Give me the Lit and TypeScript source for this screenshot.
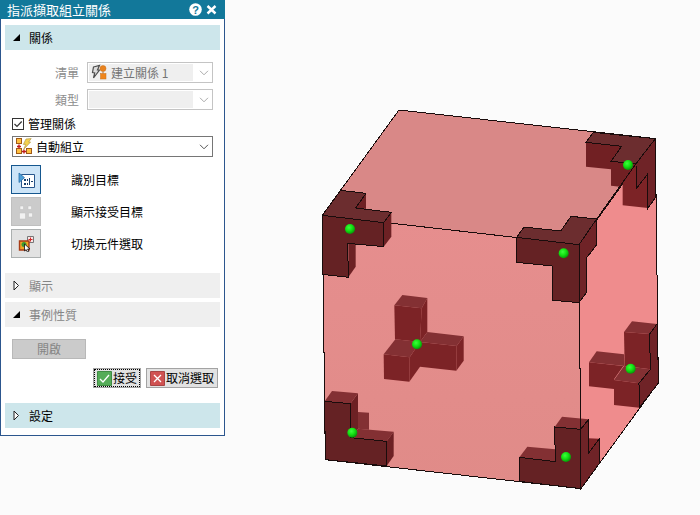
import { LitElement, html, svg, css } from "lit";
import { customElement, state } from "lit/decorators.js";

interface Face {
  tone: string;
  pts: string;
  edge?: boolean;
}

// Outer faces of the translucent cube.
const cube: Face[] = [
  { tone: "top", pts: "267,30 1036,116 807,434 37,346", edge: true },
  { tone: "front", pts: "37,346 807,434 813,1166 46,1079", edge: true },
  { tone: "right", pts: "807,434 1036,116 1045,848 813,1166", edge: true },
];

// Corner brackets; faces with an edge lie on the surface, the rest are seen through it.
const brackets: Face[] = [
  // top left
  { tone: "d-side", pts: "168,280 168,327 137,324" },
  { tone: "d-side", pts: "221,368 244,337 244,410 221,440" },
  { tone: "d-side", pts: "115,430 137,432 137,500 115,532" },
  { tone: "d-top", pts: "37,346 92,271 168,280 137,324 244,337 221,368", edge: true },
  { tone: "d-front", pts: "37,346 221,368 221,440 113,430 115,532 38,523", edge: true },
  // top right, near
  { tone: "d-top", pts: "620,412 642,381 752,393 783,349 860,357 807,434", edge: true },
  { tone: "d-front", pts: "620,412 807,434 807,608 729,601 727,498 620,487", edge: true },
  { tone: "d-right", pts: "807,434 860,357 861,433 830,473 830,577 807,608", edge: true },
  // top right, far
  { tone: "d-wall", pts: "828,127 935,139 903,184 978,191 930,260 903,257 903,208 828,200" },
  { tone: "d-inner", pts: "978,191 979,266 1013,222 1014,324 938,316 938,250" },
  { tone: "d-top", pts: "828,127 850,97 1036,116 978,191 903,184 935,139", edge: true },
  { tone: "d-right", pts: "1036,116 978,191 979,266 1013,222 1014,324 1037,292", edge: true },
  // back left, bottom
  { tone: "d-inner", pts: "253,616 335,625 330,726 255,718" },
  { tone: "d-inner", pts: "335,625 352,594 352,696 330,726" },
  { tone: "d-lid", pts: "277,585 352,594 335,625 253,616" },
  { tone: "d-inner", pts: "330,726 440,738 439,812 330,800" },
  { tone: "d-inner", pts: "440,738 461,709 461,782 439,812" },
  { tone: "d-lid", pts: "352,696 461,709 440,738 330,726" },
  { tone: "d-inner", pts: "221,763 299,772 298,845 222,837" },
  { tone: "d-inner", pts: "299,772 330,726 330,800 298,845" },
  { tone: "d-lid", pts: "256,718 330,726 299,772 221,763" },
  // bottom left
  { tone: "d-lid", pts: "144,936 177,938 177,989 144,986" },
  { tone: "d-side", pts: "121,911 144,880 144,986 122,1013" },
  { tone: "d-lid", pts: "44,904 66,873 144,880 121,911" },
  { tone: "d-lid", pts: "122,1013 144,986 251,995 230,1024" },
  { tone: "d-side", pts: "230,1024 251,995 251,1068 230,1098" },
  { tone: "d-front", pts: "44,904 121,911 122,1013 230,1024 230,1098 46,1079", edge: true },
  // bottom right, near
  { tone: "d-inner", pts: "835,1015 868,1016 835,1060" },
  { tone: "d-lid", pts: "734,981 756,950 836,958 812,988" },
  { tone: "d-lid", pts: "628,1072 652,1040 736,1048 736,1085" },
  { tone: "d-front", pts: "628,1072 736,1085 734,981 812,988 813,1166 628,1144", edge: true },
  { tone: "d-right", pts: "812,988 836,958 835,1060 868,1016 869,1089 813,1166", edge: true },
  // bottom right, far
  { tone: "d-inner", pts: "837,787 940,798 912,838 912,867 837,859" },
  { tone: "d-lid", pts: "837,787 860,754 942,763 944,798" },
  { tone: "d-inner", pts: "942,696 1019,702 1021,808 944,798" },
  { tone: "d-lid", pts: "942,696 966,664 1041,672 1019,702" },
  { tone: "d-inner", pts: "912,840 987,850 988,923 912,915" },
  { tone: "d-lid", pts: "942,798 1021,808 987,850 912,840" },
  { tone: "d-right", pts: "1041,672 1019,702 1021,808 987,850 988,923 1046,848", edge: true },
];

const markers = [
  [120, 387], [761, 460], [954, 195], [321, 733],
  [127, 998], [768, 1071], [962, 806],
];

const face = (f: Face) =>
  svg`<polygon class="${f.tone} ${f.edge ? "edge" : "plain"}" points=${f.pts}></polygon>`;

const chevron = html`<svg class="chevron" viewBox="0 0 10 6" aria-hidden="true">
  <path d="M1 .8 5 4.8 9 .8" />
</svg>`;

const arrow = (open: boolean) => html`<svg class="arrow" viewBox="0 0 9 11" aria-hidden="true">
  ${open
    ? svg`<path d="M8 2V9H1Z" fill="#000"></path>`
    : svg`<path d="M2 1V10L6.5 5.5Z" fill="#fff" stroke="#222"></path>`}
</svg>`;

const createIcon = html`<svg class="pick-icon" viewBox="0 0 16 16" aria-hidden="true">
  <path d="M2.500 3 8.500 1.500 6.500 6H8.500L2.500 14 3.700 9 1.500 8.500Z" fill="#dcdcdc" stroke="#4c4c4c" stroke-width="1.200" />
  <circle cx="12" cy="4.500" r="3" fill="#e8821e" stroke="#c87018" stroke-width=".5" />
  <rect x="9.500" y="9.500" width="5.500" height="5.500" fill="#f0861c" stroke="#c87018" stroke-width=".5" />
  <path d="M12 7.500V9.500" stroke="#b06a2c" />
</svg>`;

const autoIcon = html`<svg class="pick-icon" viewBox="0 0 16 16" aria-hidden="true">
  <rect x=".5" y=".5" width="5" height="5" fill="#ffc040" stroke="#a05a18" />
  <rect x=".5" y="10.500" width="5" height="5" fill="#ffc040" stroke="#a05a18" />
  <rect x="10.500" y="10.500" width="5" height="5" fill="#ffc040" stroke="#a05a18" />
  <path d="M1 8.500H5M3 6.500V10.500M6 13.500H10M8 11.500V15.500" stroke="#c01c1c" stroke-width="1.400" />
  <path d="M10 1 15.200.6 12.600 4H14.600L7.600 11.400 9.800 6.400H7.400Z" fill="#f4d24e" stroke="#b49a48" stroke-width=".7" />
</svg>`;

const identifyIcon = html`<svg class="tool-icon" viewBox="0 0 18 16" aria-hidden="true">
  <path d="M4.500 2.500H17.500V15.500H4.500Z" fill="#fff" stroke="#28568c" />
  <path d="M2 1V10.500L7.500 5.700Z" fill="#4b9fd8" stroke="#286ea8" stroke-width=".8" />
  <path d="M7 7h2v2H7zM7 11h2v2H7zM10 7h1v2h-1zM10 11h1v2h-1zM12 6h1v7h-1zM14 9h2v1h-2z" fill="#173f6c" />
</svg>`;

const showIcon = html`<svg class="tool-icon" viewBox="0 0 18 16" aria-hidden="true">
  <path d="M3 2h3.500v3.500H3zM11 2h3.500v3.500H11zM2.500 9h6v6h-6zM11.500 9h4v4h-4z" fill="#f2f2f2" stroke="#bebebe" stroke-width=".5" />
</svg>`;

const switchIcon = html`<svg class="tool-icon" viewBox="0 0 18 16" aria-hidden="true">
  <path d="M10.500.5H16.500V6.500H10.500Z" fill="#f8e4e4" stroke="#777" />
  <path d="M11.500 3.500H15.500M13.500 1.500V5.500" stroke="#d02828" />
  <path d="M2.500 5H12V14H2.500Z" fill="#f2a524" stroke="#a83c16" stroke-width="1.400" />
  <circle cx="7" cy="8.500" r="2.500" fill="#3c9a30" />
  <path d="M7.500 8V15L9.200 13.600 10.400 16 11.800 15.300 10.600 13H13Z" fill="#fff" stroke="#111" stroke-width=".8" />
</svg>`;

@customElement("app-root")
export class AppRoot extends LitElement {
  @state() private tool = 0;

  static styles = css`
    :host {
      display: flex;
      align-items: flex-start;
      min-height: 100vh;
      background: #fbfbfb;
      color: #000;
      font: 12px/16px "Noto Sans CJK TC", "Liberation Sans", sans-serif;
    }
    * { box-sizing: border-box; }
    button, select, input { font: inherit; color: inherit; margin: 0; }
    h1, h2 { margin: 0; font: inherit; }
    svg { display: block; fill: none; flex: none; }

    .dialog {
      flex: none;
      width: 225px;
      background: #fff;
      border: 1px solid #2c568e;
      border-top: 0;
      padding-bottom: 7px;
    }
    .title {
      display: flex;
      align-items: center;
      height: 19px;
      margin: 0 -1px 6px;
      padding: 0 8px 0 7px;
      gap: 4px;
      background: #12789a;
      color: #fff;
    }
    .title h1 { flex: 1; font-size: 13px; }
    .title button { border: 0; padding: 0; background: none; }
    .help { width: 13px; height: 13px; }
    .close { width: 11px; height: 11px; }
    .q { fill: #12789a; font: bold 11px "Liberation Sans", sans-serif; text-anchor: middle; }

    .section {
      display: flex;
      align-items: center;
      gap: 8px;
      width: calc(100% - 8px);
      height: 25px;
      margin: 0 4px;
      padding: 0 7px;
      border: 0;
      background: #cde6eb;
    }
    .section.off { background: #efefef; color: #858585; }
    .section + .section { margin-top: 4px; }
    .arrow { width: 9px; height: 11px; }

    .group { padding: 12px 11px 0; }
    .field {
      display: grid;
      grid-template-columns: 67px 1fr;
      gap: 8px;
      align-items: center;
      margin-bottom: 6px;
      color: #8c8c8c;
      text-align: right;
    }
    .pick { position: relative; }
    .pick select {
      display: block;
      appearance: none;
      width: 100%;
      height: 21px;
      padding: 0 20px 0 23px;
      border: 1px solid #767676;
      border-radius: 0;
      background: #fff;
      opacity: 1;
    }
    .pick select:disabled {
      border-color: #c4c4c4;
      color: #747474;
      background: linear-gradient(#efefef, #efefef) 1px 1px / calc(100% - 20px) calc(100% - 2px) no-repeat #fff;
    }
    .pick-icon { position: absolute; left: 4px; top: 2px; width: 16px; height: 16px; pointer-events: none; }
    .chevron { position: absolute; right: 4px; top: 8px; width: 10px; height: 6px; stroke: #555; pointer-events: none; }
    .field .chevron { stroke: #aaa; }

    .check { display: flex; align-items: center; gap: 4px; height: 16px; margin: 0 0 4px; }
    .check input {
      appearance: none;
      width: 12px;
      height: 12px;
      border: 1px solid #333;
      background: #fff;
    }
    .tick { position: absolute; inset: 0; width: 12px; height: 12px; stroke: #333; pointer-events: none; }
    .box { position: relative; display: flex; }

    .tools { display: grid; gap: 3px; padding: 8px 10px 15px; }
    .tool { display: flex; align-items: center; gap: 30px; }
    .tool button {
      display: grid;
      place-items: center;
      width: 30px;
      height: 29px;
      padding: 0;
      border: 1px solid #acb0b0;
      background: #e2e2e2;
    }
    .tool button.on { border-color: #15578f; background: #cce4f7; }
    .tool button:disabled { border-color: #bfbfbf; background: #cbcbcb; }
    .tool-icon { width: 18px; height: 16px; }

    .open {
      display: block;
      width: 74px;
      height: 20px;
      margin: 12px 11px 9px;
      padding: 0;
      border: 1px solid #b8b8b8;
      background: #cbcbcb;
      line-height: 16px;
    }
    .open:disabled { color: #858585; }
    .actions { display: flex; justify-content: flex-end; gap: 5px; padding: 0 6px 15px; }
    .actions button {
      display: flex;
      align-items: center;
      gap: 1px;
      height: 20px;
      padding: 0 3px;
      border: 1px solid #a3a3a3;
      background: #e2e2e2;
      white-space: nowrap;
    }
    .actions .accept { outline: 1px dotted #000; outline-offset: -2px; }
    .badge { width: 15px; height: 15px; }

    .view { flex: 1; min-width: 0; }
    .scene { width: 100%; height: auto; }
    .edge { stroke: #1a0c0c; stroke-width: 3; shape-rendering: crispEdges; }
    .line { stroke: #1a0c0c; stroke-width: 3; shape-rendering: crispEdges; }
    .top { fill: #d98887; }
    .front { fill: url(#front); }
    .right { fill: #ef8c8d; }
    .d-top { fill: #6c2d2f; }
    .d-front { fill: #652224; }
    .d-right { fill: #6f2327; }
    .d-side { fill: #6d2124; }
    .d-inner { fill: #7c2326; }
    .d-wall { fill: #712023; }
    .d-lid { fill: #833033; }
  `;

  render() {
    return html`
      <section class="dialog" aria-label="指派擷取組立關係">
        <header class="title">
          <h1>指派擷取組立關係</h1>
          <button aria-label="說明">
            <svg class="help" viewBox="0 0 13 13">
              <circle cx="6.5" cy="6.5" r="6.3" fill="#fff" />
              <text class="q" x="6.5" y="10.500">?</text>
            </svg>
          </button>
          <button aria-label="關閉">
            <svg class="close" viewBox="0 0 11 11"><path d="M1.500 2 9.500 9.500M9.500 2 1.500 9.500" stroke="#fff" stroke-width="2.4" /></svg>
          </button>
        </header>

        <button class="section" aria-expanded="true">${arrow(true)}<span>關係</span></button>
        <div class="group">
          <div class="field">
            <label for="list">清單</label>
            <div class="pick">
              <select id="list" disabled><option>建立關係 1</option></select>
              ${createIcon}${chevron}
            </div>
          </div>
          <div class="field">
            <label for="type">類型</label>
            <div class="pick">
              <select id="type" disabled><option></option></select>
              ${chevron}
            </div>
          </div>
          <label class="check">
            <span class="box">
              <input type="checkbox" checked />
              <svg class="tick" viewBox="0 0 12 12"><path d="M2.500 6 5 8.500 9.700 3.500" stroke-width="1.2" /></svg>
            </span>
            管理關係
          </label>
          <div class="pick">
            <select aria-label="管理關係"><option>自動組立</option></select>
            ${autoIcon}${chevron}
          </div>
        </div>

        <div class="tools">
          ${[
            ["識別目標", identifyIcon],
            ["顯示接受目標", showIcon],
            ["切換元件選取", switchIcon],
          ].map(
            ([label, icon], i) => html`<div class="tool">
              <button
                class=${i === this.tool ? "on" : ""}
                aria-labelledby="tool-${i}"
                ?disabled=${i === 1}
                @click=${() => (this.tool = i)}
              >${icon}</button>
              <span id="tool-${i}">${label}</span>
            </div>`
          )}
        </div>

        <button class="section off" aria-expanded="false">${arrow(false)}<span>顯示</span></button>
        <button class="section off" aria-expanded="true">${arrow(true)}<span>事例性質</span></button>
        <button class="open" disabled>開啟</button>
        <div class="actions">
          <button class="accept">
            <svg class="badge" viewBox="0 0 15 15"><path d="M.5.5H14.500V14.500H.5Z" fill="#55ac58" stroke="#408c44" /><path d="M3 8 6 11 12 4" stroke="#fff" stroke-width="1.3" /></svg>接受
          </button>
          <button>
            <svg class="badge" viewBox="0 0 15 15"><path d="M.5.5H14.500V14.500H.5Z" fill="#d05252" stroke="#a84444" /><path d="M4 4 11 11M11 4 4 11" stroke="#fff" stroke-width="1.3" /></svg>取消選取
          </button>
        </div>
        <button class="section" aria-expanded="false">${arrow(false)}<span>設定</span></button>
      </section>

      <main class="view">
        <svg class="scene" viewBox="-255 -300 1425 1545" role="img" aria-label="組立">
          <defs>
            <linearGradient id="front" x1="0" y1="0" x2="0" y2="1">
              <stop offset="0" stop-color="#e68e8e" />
              <stop offset="1" stop-color="#e08b88" />
            </linearGradient>
            <radialGradient id="ball" cx=".4" cy=".35" r=".7">
              <stop offset="0" stop-color="#3cff3c" />
              <stop offset=".5" stop-color="#12e012" />
              <stop offset="1" stop-color="#078a07" />
            </radialGradient>
          </defs>
          ${cube.map(face)} ${brackets.map(face)}
          <path class="line" d="M860 357 978 191M812 950V988M221 368 244 337" />
          ${markers.map(([x, y]) => svg`<circle cx=${x} cy=${y} r="15" fill="url(#ball)"></circle>`)}
        </svg>
      </main>
    `;
  }
}
